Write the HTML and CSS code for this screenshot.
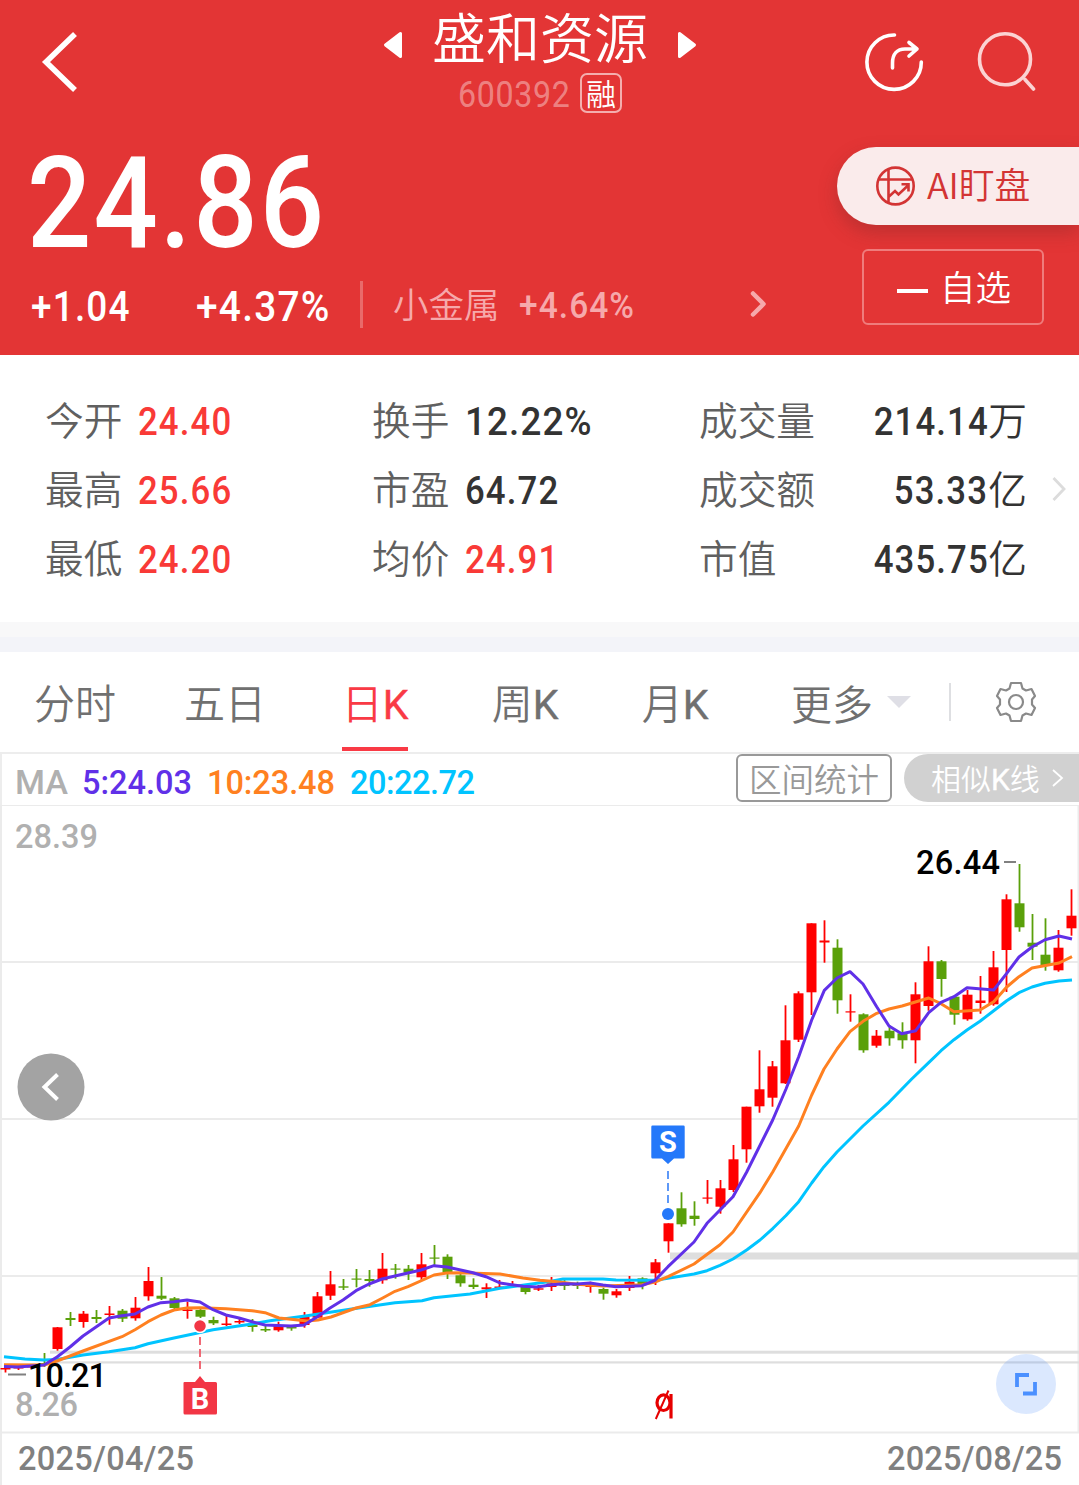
FILE: index.html
```html
<!DOCTYPE html>
<html lang="zh-CN">
<head>
    <meta charset="UTF-8">
    <meta name="viewport" content="width=device-width, initial-scale=1.0">
    <title>盛和资源 600392</title>
    <link rel="stylesheet" href="styles.css">
</head>
<body>

    <!-- Cabeçalho -->
    <header class="header">
        <div class="topbar">
            <svg class="back" width="38" height="64" viewBox="0 0 38 64"><path d="M35 4L6 32L35 60" fill="none" stroke="#fff" stroke-width="5.600"/></svg>
            <div class="title">
                <div class="name-row">
                    <svg width="20" height="28" viewBox="0 0 20 28"><path d="M17.500 2.500V25.500L2.500 14Z" fill="#fff" stroke="#fff" stroke-width="3" stroke-linejoin="round"/></svg>
                    <h1>盛和资源</h1>
                    <svg width="20" height="28" viewBox="0 0 20 28"><path d="M2.500 2.500V25.500L17.500 14Z" fill="#fff" stroke="#fff" stroke-width="3" stroke-linejoin="round"/></svg>
                </div>
                <div class="code-row">
                    <span class="code"><span class="din">600392</span></span>
                    <span class="tag">融</span>
                </div>
            </div>
            <div class="actions">
                <svg width="60" height="64" viewBox="0 0 60 64" fill="none" stroke="#fff" stroke-width="3.600" stroke-linecap="round" stroke-linejoin="round"><path d="M30.500 6A27.200 27.200 0 1 0 57.300 33"/><path d="M28.500 39V34C28.500 25 33 20 41 20H52M45 13.500L53 20L45 27"/></svg>
                <svg width="60" height="64" viewBox="0 0 60 64" fill="none" stroke="#fbd3d3" stroke-width="3.600" stroke-linecap="round"><circle cx="29" cy="30.300" r="25.500"/><path d="M49 50.500L57.500 60"/></svg>
            </div>
        </div>
        <div class="quote">
            <div class="quote-left">
                <div class="price"><span class="din">24.86</span></div>
                <div class="change">
                    <span class="diff"><span class="din">+1.04</span></span>
                    <span class="rate"><span class="din">+4.37%</span></span>
                    <span class="sector">小金属</span>
                    <span class="sector-rate"><span class="din">+4.64%</span></span>
                    <svg width="18" height="28" viewBox="0 0 18 28"><path d="M4 3.500L14.500 14L4 24.500" fill="none" stroke="#f6a9ab" stroke-width="4.500" stroke-linecap="round" stroke-linejoin="round"/></svg>
                </div>
            </div>
            <div class="quote-right">
                <div class="ai">
                    <svg width="40" height="41" viewBox="0 0 40 41" fill="none" stroke="#d33434" stroke-width="2.600"><ellipse cx="19.500" cy="20" rx="18.200" ry="18.400"/><path d="M12.500 3.500V37M3 13.500H37M13 30.500L19 25L22.500 28.500L32 19.500M25.500 18.300H32.500V25.500"/></svg>
                    <span>AI盯盘</span>
                </div>
                <div class="fav"><i class="minus"></i><span>自选</span></div>
            </div>
        </div>
    </header>

    <!-- Indicadores -->
    <section class="stats">
        <dl class="col">
            <div><dt>今开</dt><dd class="up"><span class="din">24.40</span></dd></div>
            <div><dt>最高</dt><dd class="up"><span class="din">25.66</span></dd></div>
            <div><dt>最低</dt><dd class="up"><span class="din">24.20</span></dd></div>
        </dl>
        <dl class="col">
            <div><dt>换手</dt><dd><span class="din percent">12.22%</span></dd></div>
            <div><dt>市盈</dt><dd><span class="din">64.72</span></dd></div>
            <div><dt>均价</dt><dd class="up"><span class="din">24.91</span></dd></div>
        </dl>
        <dl class="col col-wide">
            <div><dt>成交量</dt><dd><span class="din">214.14</span>万</dd></div>
            <div><dt>成交额</dt><dd><span class="din">53.33</span>亿</dd></div>
            <div><dt>市值</dt><dd><span class="din">435.75</span>亿</dd></div>
        </dl>
        <svg class="more-arrow" width="16" height="28" viewBox="0 0 16 28"><path d="M2.500 3L13 14L2.500 25" fill="none" stroke="#dcdcdc" stroke-width="2.800"/></svg>
    </section>
    <div class="divider"></div>

    <!-- Abas -->
    <nav class="tabs">
        <a class="tab">分时</a>
        <a class="tab">五日</a>
        <a class="tab active"><span>日<b>K</b></span></a>
        <a class="tab">周<b>K</b></a>
        <a class="tab">月<b>K</b></a>
        <a class="tab tab-more">更多<i class="caret"></i></a>
        <svg class="gear" width="42" height="42" viewBox="0 0 42 42" fill="none" stroke="#8a8a8a" stroke-width="2.200" stroke-linejoin="round"><circle cx="21" cy="21" r="7"/><path d="M16 2H26L27.500 7.500L31 9.500L36.500 8L40 15L37 18.500V23.500L40 27L36.500 34L31 32.500L27.500 34.500L26 40H16L14.500 34.500L11 32.500L5.500 34L2 27L5 23.500V18.500L2 15L5.500 8L11 9.500L14.500 7.500Z"/></svg>
    </nav>

    <div class="ma-bar">
        <svg class="ma-text" width="480" height="50" viewBox="0 0 480 50">
            <text x="15" y="41.500" textLength="53" lengthAdjust="spacingAndGlyphs" fill="#b0b0b0">MA</text>
            <text x="82" y="41.500" textLength="110" fill="#6030e8">5:24.03</text>
            <text x="207" y="41.500" textLength="128" fill="#ff8020">10:23.48</text>
            <text x="350" y="41.500" textLength="125" fill="#00c4ff">20:22.72</text>
        </svg>
        <span class="range">区间统计</span>
        <span class="similar"><span>相似<b>K</b>线</span><svg width="14" height="20" viewBox="0 0 14 20"><path d="M2 2L11 10L2 18" fill="none" stroke="#fff" stroke-width="1.800"/></svg></span>
    </div>

    <!-- Gráfico de velas -->
    <svg class="chart" width="1079" height="680" viewBox="0 805 1079 680">
        <g class="grid">
            <path d="M0 805H1079M0 962H1079M0 1119H1079M0 1276H1079M0 1432.500H1079M1 805V1485M1078.500 805V1433"/>
        </g>
        <g fill="#dedede">
            <rect x="670" y="1252.500" width="409" height="7"/>
            <rect x="50" y="1350.700" width="1029" height="3"/>
            <rect x="50" y="1361.300" width="1029" height="2.200"/>
        </g>
        <g id="candles"></g>
        <g id="lines" class="lines"></g>

        <text class="lbl" x="15" y="847.500" textLength="83" fill="#b0b0b0">28.39</text>
        <text class="lbl" x="15" y="1416" textLength="63" fill="#b0b0b0">8.26</text>
        <text class="lbl" x="916" y="873.500" textLength="84" fill="#000">26.44</text>
        <text class="lbl" x="28" y="1386.500" textLength="79" fill="#000">10.21</text>
        <text class="lbl" x="18" y="1469.500" textLength="176" fill="#808080">2025/04/25</text>
        <text class="lbl" x="887" y="1469.500" textLength="175" fill="#808080">2025/08/25</text>
        <path d="M1004 862H1016M8 1374.500H26" stroke="#808080" stroke-width="1.800"/>

        <!-- compra / venda -->
        <path d="M200 1337V1370" stroke="#f05a68" stroke-width="1.800" stroke-dasharray="8 4"/>
        <circle cx="200" cy="1326" r="6.500" fill="#f23645" stroke="#fff" stroke-width="1.500"/>
        <path d="M184.500 1382H195L200 1376L205 1382H215.500Q217 1382 217 1383.500V1413Q217 1414.500 215.500 1414.500H185Q183.500 1414.500 183.500 1413V1383Q183.500 1382 184.500 1382Z" fill="#f23645"/>
        <text class="mark" x="200" y="1408.500">B</text>
        <path d="M668 1171V1205" stroke="#4d8ef7" stroke-width="1.800" stroke-dasharray="8 4"/>
        <circle cx="668" cy="1214" r="6" fill="#2478fa"/>
        <path d="M652.500 1125.500H683.500Q684.700 1125.500 684.700 1126.700V1157Q684.700 1158.500 683.500 1158.500H674L668 1164L662 1158.500H652.500Q651.300 1158.500 651.300 1157V1126.700Q651.300 1125.500 652.500 1125.500Z" fill="#2478fa"/>
        <text class="mark" x="668" y="1152">S</text>
        <g fill="none" stroke="#e60000" stroke-width="3.200"><ellipse cx="663.500" cy="1402.700" rx="6.500" ry="7.800"/><path d="M671 1394V1418.500"/><path d="M668.500 1390.500L655.800 1419" stroke-width="2"/></g>

        <circle cx="51" cy="1087" r="33.500" fill="#a3a3a3"/>
        <path d="M57.500 1074.500L44.500 1087L57.500 1099.500" fill="none" stroke="#fff" stroke-width="4"/>
        <circle cx="1026" cy="1384" r="30" fill="#4b8cfa" fill-opacity=".2"/>
        <path d="M1017 1387V1375H1029M1035 1382V1393.500H1023" fill="none" stroke="#4b90ff" stroke-width="3.800"/>
    </svg>

    <script src="chart.js"></script>
</body>
</html>
```

FILE: styles.css
```css
* {
    box-sizing: border-box;
}

body {
    font-family: "Noto Sans CJK SC", sans-serif;
    font-weight: 350;
    margin: 0;
    background-color: #fff;
    color: #333;
}

h1, dl, dd {
    margin: 0;
    font-weight: 350;
}

svg {
    display: block;
    flex: none;
}

b {
    font-family: Roboto, sans-serif;
    font-weight: 400;
    -webkit-text-stroke: .4px currentColor;
}

/* números estreitos */
.din {
    display: inline-block;
    font-family: Roboto, sans-serif;
    font-weight: 500;
    letter-spacing: .032em;
    transform: scaleX(.88);
    transform-origin: left;
    white-space: nowrap;
}

.header {
    height: 355px;
    background-color: #e33535;
    color: #fff;
    overflow: hidden;
}

.topbar {
    height: 132px;
    display: grid;
    grid-template-columns: 340px 400px 1fr;
}

.back {
    margin: 30px 0 0 40px;
}

.name-row {
    display: flex;
    align-items: center;
    justify-content: center;
    gap: 29px;
    height: 74px;
}

.name-row svg {
    margin-top: 16px;
}

.name-row h1 {
    font-size: 54px;
    line-height: 74px;
    margin-top: -2px;
    white-space: nowrap;
}

.code-row {
    display: flex;
    align-items: center;
    height: 40px;
    padding-left: 118px;
    margin-top: -1px;
}

.code {
    width: 122px;
    font-family: Roboto, sans-serif;
    font-size: 36.5px;
    line-height: 40px;
    padding-top: 4px;
    color: rgba(255, 255, 255, .4);
}

.code .din {
    font-weight: 400;
    letter-spacing: .022em;
}

.tag {
    width: 42px;
    height: 40px;
    border: 2px solid rgba(255, 255, 255, .6);
    border-radius: 7px;
    font-size: 30px;
    line-height: 34px;
    text-align: center;
}

.actions {
    display: flex;
    gap: 52px;
    padding: 29px 0 0 124px;
}

.quote {
    display: flex;
    justify-content: space-between;
}

.price {
    height: 134px;
    padding: 8px 0 0 27px;
    font-family: Roboto, sans-serif;
    font-size: 128px;
    line-height: 126px;
}

.price .din {
    letter-spacing: .018em;
    transform: scaleX(.885);
}

.change {
    display: flex;
    align-items: center;
    height: 76px;
    padding-left: 31px;
    font-size: 42px;
}

.diff, .rate, .sector-rate {
    height: 47px;
    font-family: Roboto, sans-serif;
    line-height: 51px;
}

.diff {
    width: 165px;
}

.rate {
    width: 167px;
    border-right: 3px solid #e96a6a;
}

.rate .din {
    transform: scaleX(.925);
}

.sector {
    width: 125px;
    padding-left: 30px;
    font-size: 35.5px;
    line-height: 50px;
    margin-top: -3px;
    color: #f6a9ab;
    white-space: nowrap;
}

.sector-rate {
    width: 261px;
    padding-left: 31px;
    font-size: 37px;
    line-height: 49px;
    color: #f6a9ab;
}

.sector-rate .din {
    transform: scaleX(.905);
}

.quote-right {
    width: 242px;
    padding-top: 15px;
}

.ai {
    display: flex;
    align-items: center;
    gap: 11px;
    height: 78px;
    padding-left: 39px;
    border-radius: 39px 0 0 39px;
    background-color: #faebeb;
    box-shadow: 0 8px 18px rgba(120, 40, 40, .35);
    color: #d33434;
    font-size: 35.8px;
}

.ai span {
    margin-top: -6px;
}

.fav {
    display: flex;
    align-items: center;
    gap: 12px;
    width: 182px;
    height: 76px;
    margin: 24px 0 0 25px;
    padding-left: 33px;
    border: 2px solid #ef7c7c;
    border-radius: 6px;
    font-size: 35.5px;
}

.fav span {
    margin-top: -4px;
}

.minus {
    width: 31px;
    height: 4px;
    margin-top: 7px;
    background-color: #fff;
}

.stats {
    display: flex;
    height: 267px;
    padding: 29px 0 0 45px;
    font-size: 38.7px;
}

.col {
    width: 327px;
}

.col > div {
    display: flex;
    height: 69px;
    line-height: 69px;
    gap: 16px;
}

.col-wide {
    width: 328px;
}

.col-wide > div {
    justify-content: space-between;
}

.col-wide .din {
    transform-origin: right;
}

dt {
    color: #606060;
}

dd .din {
    font-size: 39.5px;
}

dd .percent {
    transform: scaleX(.93);
}

.up {
    color: #f93a37;
}

.more-arrow {
    margin: 91px 0 0 24px;
}

.divider {
    height: 30px;
    background: linear-gradient(#f8f8f9 50%, #f3f4f9 50%);
}

.tabs {
    display: flex;
    align-items: center;
    height: 100px;
    font-size: 41px;
    color: #707070;
}

.tab {
    width: 150px;
    height: 100px;
    line-height: 98px;
    text-align: center;
}

.active span {
    display: inline-block;
    height: 99px;
    border-bottom: 4px solid #f93a45;
    color: #f93a45;
}

.tab-more {
    display: flex;
    align-items: center;
    gap: 14px;
    width: 201px;
    height: 38px;
    padding-left: 41px;
    border-right: 2px solid #dedfe2;
}

.caret {
    border: 12px solid transparent;
    border-top-color: #dfdfe6;
    border-bottom: 0;
}

.gear {
    margin-left: 44px;
}

.ma-bar {
    display: flex;
    height: 53px;
    border-top: 2px solid #ededed;
    border-left: 2px solid #ededed;
}

.ma-text {
    margin: -2px 0 0 -2px;
}

.ma-text text, .lbl {
    font-family: Roboto, sans-serif;
    font-size: 32.5px;
    font-weight: 500;
}

.range {
    width: 156px;
    height: 48px;
    margin-left: 256px;
    border: 2px solid #999;
    border-radius: 6px;
    font-size: 32.5px;
    line-height: 43px;
    text-align: center;
    color: #999;
}

.similar {
    display: flex;
    align-items: center;
    width: 175px;
    height: 48px;
    margin-left: 12px;
    padding-left: 27px;
    border-radius: 24px 0 0 24px;
    background-color: #d1d1d1;
    font-size: 30px;
    line-height: 44px;
    color: #fff;
}

.similar svg {
    margin-left: 11px;
}

.grid path {
    fill: none;
    stroke: #ebebeb;
    stroke-width: 2;
}

.lines path {
    fill: none;
    stroke-width: 3;
    stroke-linejoin: round;
}

.mark {
    font-family: Roboto, sans-serif;
    font-size: 29px;
    font-weight: 700;
    fill: #fff;
    text-anchor: middle;
}
```

FILE: chart.js
```js
// [cor, máxima, topo do corpo, base do corpo, mínima]
const candles = [
    ["r", 1367, 1368, 1369.5, 1372.5], ["r", 1365, 1367, 1368.5, 1370], ["r", 1364, 1366, 1367.5, 1369], ["g", 1353, 1363, 1365, 1367],
    ["r", 1327, 1327.3, 1349, 1350.7], ["g", 1312, 1318, 1320, 1326], ["r", 1311, 1313.7, 1322, 1327.7], ["g", 1310, 1317, 1319, 1323],
    ["r", 1306, 1313.5, 1315, 1324.7], ["g", 1309, 1310.7, 1318.7, 1322], ["r", 1297, 1307.7, 1318.3, 1320.7], ["r", 1267, 1281, 1296.3, 1300.7],
    ["g", 1277, 1295.7, 1298.7, 1300], ["g", 1297, 1298.3, 1308, 1309], ["r", 1301.7, 1309.5, 1311, 1318.7], ["g", 1307, 1310, 1316.7, 1318],
    ["g", 1316.7, 1320, 1323.3, 1325], ["r", 1315, 1323.5, 1325, 1326], ["r", 1317, 1321, 1322.5, 1324], ["g", 1319, 1325, 1327, 1331.7],
    ["g", 1325, 1329, 1330.5, 1332], ["r", 1321.7, 1325.3, 1330.3, 1331.7], ["g", 1325, 1327, 1328.5, 1330.7], ["r", 1312, 1316.7, 1325, 1327.7],
    ["r", 1292, 1296.3, 1317.7, 1318], ["r", 1271, 1284.3, 1295.7, 1300], ["g", 1279, 1286.3, 1287.7, 1290], ["g", 1269, 1278.5, 1279.7, 1287.3],
    ["g", 1270, 1279, 1281, 1286.7], ["r", 1253, 1268.7, 1280.3, 1283.7], ["g", 1264, 1268.5, 1269.7, 1278.7], ["g", 1265, 1268.7, 1272.7, 1280],
    ["r", 1253, 1264.3, 1277.3, 1280], ["g", 1245, 1257.5, 1258.7, 1266], ["g", 1254.3, 1256.7, 1272.3, 1279], ["g", 1273, 1275.3, 1283.3, 1286.7],
    ["g", 1278.3, 1284.7, 1287, 1289], ["r", 1283.3, 1287.3, 1289.3, 1298], ["r", 1280, 1286.5, 1288, 1288.7], ["r", 1281, 1285.5, 1287, 1287.5],
    ["g", 1285, 1286.7, 1292, 1294.3], ["r", 1285, 1288.3, 1289.7, 1291], ["r", 1277, 1283.3, 1287, 1291], ["g", 1280, 1284, 1286, 1290],
    ["g", 1281.7, 1284, 1286, 1289], ["r", 1281.7, 1285.5, 1287, 1292.7], ["g", 1287.7, 1289, 1293.7, 1299.7], ["r", 1289, 1291.3, 1295.3, 1297.7],
    ["r", 1276, 1281.7, 1288, 1291], ["g", 1277.3, 1278.3, 1285, 1289.3], ["r", 1259, 1262.3, 1273.3, 1285], ["r", 1223.3, 1223.3, 1241.3, 1252.7],
    ["g", 1192.3, 1208.3, 1224.3, 1226.7], ["g", 1201.3, 1215.7, 1219, 1225.7], ["r", 1180, 1197.5, 1198.7, 1203.7], ["r", 1180, 1188.3, 1206.7, 1213.7],
    ["r", 1145, 1159.3, 1190, 1192], ["r", 1106.7, 1106.7, 1149.3, 1162.7], ["r", 1050.3, 1089.3, 1106.3, 1112.7], ["r", 1061, 1066.3, 1097.7, 1106.7],
    ["r", 1005.3, 1040.3, 1083.3, 1084], ["r", 991.3, 993.3, 1039.7, 1042], ["r", 923.3, 923.3, 992.3, 1015], ["r", 920.3, 940.5, 942.5, 962.7],
    ["g", 939.3, 947.7, 1000.3, 1013.7], ["r", 994.3, 1011.3, 1012.5, 1021.7], ["g", 1013.3, 1014.3, 1050.3, 1052.7], ["r", 1030, 1035.7, 1045.7, 1047.7],
    ["g", 1025, 1030.7, 1038.3, 1045.7], ["g", 1022.3, 1033.3, 1040.3, 1048.7], ["r", 982.3, 994.3, 1040.3, 1063.3], ["r", 946.3, 961.3, 1006, 1010.7],
    ["g", 960, 961.3, 979, 996.7], ["g", 996, 996.7, 1014.7, 1024.7], ["r", 990, 994.7, 1019.3, 1020.7], ["r", 976, 1000.5, 1003, 1013.7],
    ["r", 951, 967.3, 1004.3, 1005.7], ["r", 894.3, 899.3, 950, 992], ["g", 864, 903.3, 927.3, 931.7], ["g", 914, 942.7, 946.7, 960],
    ["g", 918.3, 954.7, 965.7, 970.7], ["r", 930, 947.7, 970.3, 971.7], ["r", 889.3, 915.7, 928.3, 935.7]
];

const lines = {
    "#00c4ff": "4,1356.7 25,1359 44,1360 57,1359.5 83,1355 109,1351.7 135,1347.7 148,1343.7 174,1338 213,1329.7 252,1324 270,1320.7 307,1315.7 350,1309.3 395,1302.7 422,1300.7 434,1297.7 470,1294 500,1288.3 537,1283.3 550,1281.5 563,1279 603,1279 616,1280 655,1280.3 668,1278.3 694,1274 707,1270.7 720,1265.3 733,1259 747,1249.7 760,1240 773,1228.3 786,1215.5 798.7,1201.7 811.7,1183 824,1166.7 837,1152 863,1126 889,1102.3 911.7,1079 928.7,1062.7 941,1050.7 954,1039.7 967,1030 980,1021.3 993.7,1010.7 1006.7,1000.7 1019,992.7 1032,987 1045,983.3 1059,981 1072,980",
    "#ff8020": "4,1364.7 44,1365 57,1361 83,1351 122,1336.7 135,1329.7 148,1321.7 161,1315 174,1310 187,1308 200,1307.7 226,1308.7 252,1310.7 265,1312.7 279,1318 291,1319.3 307,1321 318,1320 331,1317 356,1308 370,1304.7 382.7,1298 395,1291.3 408,1286.7 434,1275 446.7,1273 460,1272.7 500,1274 523,1278 540,1280.3 557,1281.7 577,1284.3 603,1286 642,1284.7 655,1282 668,1276.7 694,1264 720,1244.7 733,1232 760,1192.7 772.7,1172 798.7,1126 811.7,1095 824,1069 837,1049 850,1031.7 863,1021.3 876.7,1013.3 889,1009 902,1006 928.7,998 941,1003.7 954,1011.7 980,1010 993.7,1001.7 1006.7,987 1019,976.7 1032,968 1059,963 1072,956.7",
    "#6030e8": "4,1366.5 18,1367 31,1366 44,1365 57,1357 70,1347 83,1336 109,1318 122,1315.7 135,1314 148,1307 161,1302.7 174,1301.7 187,1300 200,1302 213,1309.7 226,1315 239,1318 252,1321.7 265,1325 291,1326 304,1325 317,1317 330,1308 343,1300 356,1290.7 369,1284 382,1279 395,1276 408,1273 421,1270 434,1265.7 447,1267 473,1272.7 486,1276.7 500,1283 523,1286.3 537,1287 552,1284.7 564,1283.7 577,1284 590,1283 603,1285 616,1286.7 642,1285.7 655,1280.3 668,1266.7 694,1242 707,1223.3 733,1196.7 746.7,1172 772.7,1120 786,1089 798.7,1056.7 811.7,1020 824.3,990.3 837,978 850,971.7 863,984 876.7,1006.7 889,1026 901.7,1033.7 915.7,1030.7 928.7,1012.7 941,1002.3 954,996.7 967,987.7 993.7,990 1006.7,973.3 1019,957 1032,947 1045,939.7 1059,936 1072,939"
};

const colors = { r: "#ff0000", g: "#5aa00a" };

// desenha as velas
document.getElementById("candles").innerHTML = candles.map(([c, high, top, bottom, low], i) => {
    const x = 5.5 + i * 13;
    return `<g fill="${colors[c]}"><rect x="${x - 5}" y="${top}" width="10" height="${bottom - top}"/>` +
        `<rect x="${x - 0.9}" y="${high}" width="1.8" height="${low - high}"/></g>`;
}).join("");

// médias móveis
document.getElementById("lines").innerHTML = Object.entries(lines)
    .map(([color, points]) => `<path stroke="${color}" d="M${points.split(" ").join("L")}"/>`)
    .join("");
```
